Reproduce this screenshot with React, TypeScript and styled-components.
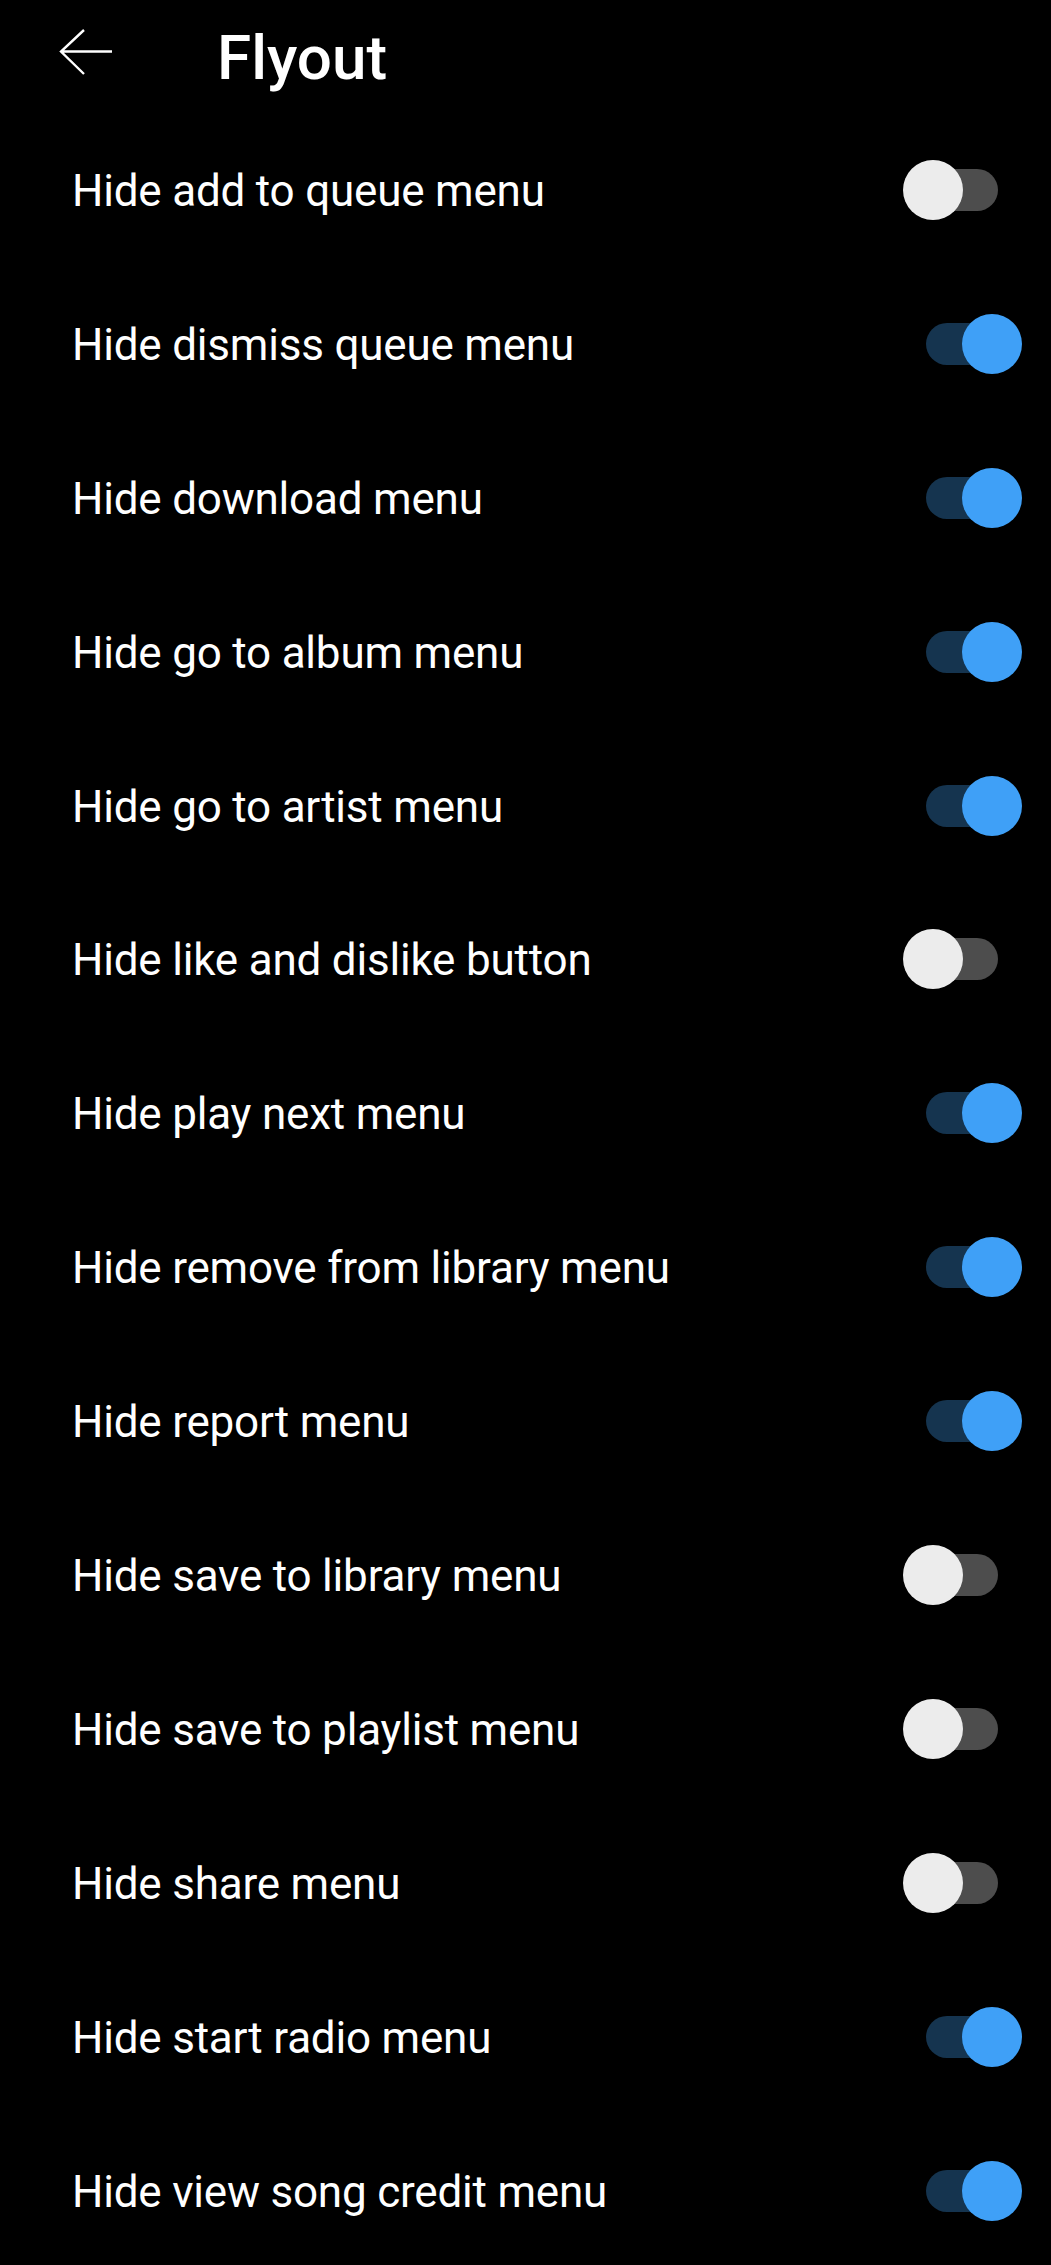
import { useState } from 'react'
import styled, { createGlobalStyle } from 'styled-components'

const GlobalStyle = createGlobalStyle`
  html, body {
    margin: 0;
    padding: 0;
    background: #000;
  }
  body {
    font-family: Roboto, "Noto Sans", sans-serif;
    color: #fff;
  }
`

const Page = styled.div`
  width: 1051px;
  min-height: 2265px;
  background: #000;
`

const Header = styled.header`
  height: 113px;
  display: flex;
  align-items: center;
  padding-left: 58px;
  box-sizing: border-box;
`

const BackButton = styled.button`
  width: 56px;
  height: 50px;
  padding: 0;
  margin: 0;
  border: none;
  background: transparent;
  display: flex;
  align-items: center;
  justify-content: center;
  margin-top: -6px;
`

const Title = styled.h1`
  margin: 2px 0 0 103px;
  font-size: 62px;
  font-weight: 500;
  letter-spacing: 0;
  color: #fff;
`

const List = styled.div`
  display: flex;
  flex-direction: column;
`

const Row = styled.div`
  height: 153.9px;
  display: flex;
  align-items: center;
  justify-content: space-between;
  padding: 0 29px 0 72px;
  box-sizing: border-box;
`

const Label = styled.span`
  font-size: 44px;
  font-weight: 400;
  letter-spacing: -0.2px;
  color: #fff;
  margin-top: 2px;
`

const Switch = styled.button`
  position: relative;
  width: 119px;
  height: 60px;
  padding: 0;
  border: none;
  background: transparent;
  cursor: pointer;
`

const Track = styled.span<{ $on: boolean }>`
  position: absolute;
  left: 23px;
  top: 9px;
  width: 72px;
  height: 42px;
  border-radius: 21px;
  background: ${p => (p.$on ? '#15344f' : '#4d4d4d')};
`

const Knob = styled.span<{ $on: boolean }>`
  position: absolute;
  top: 0;
  left: ${p => (p.$on ? '59px' : '0')};
  width: 60px;
  height: 60px;
  border-radius: 50%;
  background: ${p => (p.$on ? '#3fa0f7' : '#ececec')};
`

const items: [string, boolean][] = [
  ['Hide add to queue menu', false],
  ['Hide dismiss queue menu', true],
  ['Hide download menu', true],
  ['Hide go to album menu', true],
  ['Hide go to artist menu', true],
  ['Hide like and dislike button', false],
  ['Hide play next menu', true],
  ['Hide remove from library menu', true],
  ['Hide report menu', true],
  ['Hide save to library menu', false],
  ['Hide save to playlist menu', false],
  ['Hide share menu', false],
  ['Hide start radio menu', true],
  ['Hide view song credit menu', true]
]

const App = () => {
  const [values, setValues] = useState(items.map(i => i[1]))
  const toggle = (idx: number) => {
    const next = [...values]
    next[idx] = !next[idx]
    setValues(next)
  }
  return (
    <Page>
      <GlobalStyle />
      <Header>
        <BackButton aria-label="Back">
          <svg width="56" height="50" viewBox="0 0 56 50" fill="none">
            <path
              d="M54 22.5H3 M26 1 L3 22.5 L26 45"
              stroke="#fff"
              strokeWidth="2.4"
              strokeLinecap="butt"
              strokeLinejoin="miter"
            />
          </svg>
        </BackButton>
        <Title>Flyout</Title>
      </Header>
      <List>
        {items.map(([label], idx) => (
          <Row key={label}>
            <Label>{label}</Label>
            <Switch onClick={() => toggle(idx)} aria-pressed={values[idx]}>
              <Track $on={values[idx]} />
              <Knob $on={values[idx]} />
            </Switch>
          </Row>
        ))}
      </List>
    </Page>
  )
}

export default App
